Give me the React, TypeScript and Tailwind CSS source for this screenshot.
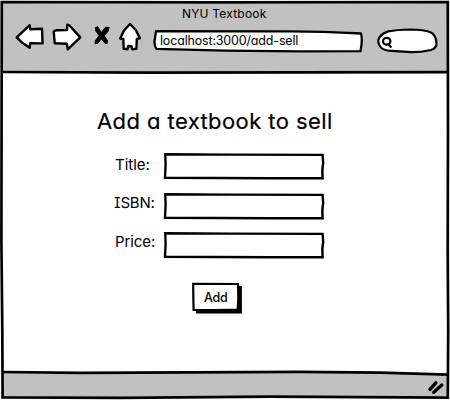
import type { ReactNode } from "react";

function Toolbar() {
  return (
    <div className="flex h-[51px] pl-[15px]">
      <svg width="135" height="51" viewBox="15 22 135 51" fill="white" stroke="black" strokeWidth="2.4" strokeLinejoin="round">
        <path d="M16.7 37.3 L29.7 25.2 L30.2 29.2 L42 28.8 L42.6 43.4 L30.2 43.2 L29.7 47.8 L22.3 42.8 Z" />
        <path d="M53.7 31.5 L56.5 30.2 L67 30 L67.3 24.7 L69.5 25.5 L80.3 37.4 L67.8 49.3 L66.8 43.8 L54.7 43.2 Z" />
        <path d="M95.3 27.6 L97.8 26.8 L101.3 32.5 L105.5 27.3 L109.2 27.3 L108.3 31 L104.2 35.7 L107.4 40.5 L107.2 43.5 L105 43.3 L101.3 38.8 L97.8 43.4 L95 43.7 L95.2 41 L99 35.5 L95.8 31 Z" fill="black" strokeWidth="1" />
        <path d="M130 24 L135.7 30 L140 38.2 L136.8 39 L136.4 48.8 L132.2 49.2 L131.5 46.2 L128.3 46 L127.5 49.2 L123.7 48.7 L123.3 39 L120.2 38.5 L124 30.5 Z" />
      </svg>
      <div className="relative mt-[8px] ml-[3px] h-[24px] w-[211px]">
        <svg className="absolute inset-0" width="211" height="24" viewBox="153 30 211 24" fill="white" stroke="black" strokeWidth="2.3" strokeLinejoin="round">
          <path d="M156 31.2 L285 31.4 Q318 31.2 361 33.5 Q362.8 40 360.5 51.2 L300 51.3 L225 50.7 L156.4 48.8 Q153.5 45 155 38 Z" />
        </svg>
        <span className="relative block pt-[2px] pl-[7px] text-[12.5px] leading-[18px] tracking-[-0.17px]">localhost:3000/add-sell</span>
      </div>
      <svg className="mt-[4px] ml-[12px]" width="64" height="28" viewBox="376 26 64 28" fill="white" stroke="black" strokeWidth="2.2" strokeLinejoin="round">
        <path d="M378.4 40 Q380 34 388 31.4 Q397 29.8 410 29.5 Q424 29.8 430 32 Q436 34.5 436.5 43 Q436.8 48 431 50 Q420 52.3 411 52.2 L392 50.8 Q383 51 379.8 46 Q377.8 43 378.4 40 Z" />
        <ellipse cx="386.7" cy="41.2" rx="3.7" ry="3.4" />
        <path d="M388 44 L391.4 47.6" fill="none" />
      </svg>
    </div>
  );
}

function Field({ label, className, gap }: { label: string; className: string; gap: string }) {
  return (
    <div className={`flex h-[27px] ${gap}`}>
      <div className={`w-[163px] text-[15px] leading-[20px] whitespace-nowrap ${className}`}>{label}</div>
      <svg width="162" height="27" viewBox="163 153 162 27" fill="white" stroke="black">
        <path d="M165.3 154.2 L230 154.6 L322.6 154.9 L323.2 163 L322.3 170 L322.6 178.2 L270 178.2 L165 177.8 L165.6 165 Z" strokeWidth="2.4" />
        <path d="M165 154.5 L248 154.5 M210 178.5 L323 178.5 M322.8 155 L322.5 178" strokeWidth="1.2" fill="none" />
      </svg>
    </div>
  );
}

function AddButton({ children }: { children: ReactNode }) {
  return (
    <button type="button" className="relative mt-[23px] ml-[191px] block h-[32px] w-[52px] text-left">
      <svg className="absolute inset-0" width="52" height="32" viewBox="191 283 52 32">
        <path d="M196 287 H241.9 V314.4 H196 Z" />
        <path d="M193.2 284.9 L238 285 L238.3 299 L237.7 310.5 L216 311 L193.6 310.8 L193.3 297 Z" fill="white" stroke="black" strokeWidth="2.2" />
      </svg>
      <span className="relative block pl-[13px] text-[12.5px] leading-[16px] font-medium tracking-[-0.2px]">{children}</span>
    </button>
  );
}

export default function App() {
  return (
    <div className="relative flex h-[400px] w-[450px] flex-col overflow-hidden bg-white font-['Inter','Noto_Sans',sans-serif] text-black [font-feature-settings:'cv11','cv08']">
      <header className="mx-[2px] mt-[1px] h-[72px] bg-[#c1c1c1]">
        <div className="-ml-[2px]">
          <h1 className="h-[21px] pt-[3px] pl-[182px] text-[12px] leading-[20px] tracking-[0.2px]">NYU Textbook</h1>
          <Toolbar />
        </div>
      </header>
      <main className="h-[300px]">
        <h2 className="h-[80px] pt-[33px] pl-[97px] text-[22px] leading-[30px] tracking-[0.42px] whitespace-nowrap [-webkit-text-stroke:0.2px_black]">Add a textbook to sell</h2>
        <Field label="Title:" className="pt-[2px] pl-[115px]" gap="" />
        <Field label="ISBN:" className="pl-[114px] tracking-[-0.2px]" gap="mt-[13px]" />
        <Field label="Price:" className="pl-[115px] tracking-[-0.1px]" gap="mt-[12px]" />
        <AddButton>Add</AddButton>
      </main>
      <footer className="mx-[2px] flex h-[25px] justify-end bg-[#c1c1c1]">
        <svg className="mt-[6px] mr-[3px]" width="18" height="17" viewBox="427 379 18 17" stroke="black" strokeWidth="3.4" strokeLinecap="round">
          <path d="M430 389.4 L435.8 382.8 M433.8 392.3 L441.8 385" />
        </svg>
      </footer>
      <svg className="pointer-events-none absolute inset-0" width="450" height="400" viewBox="0 0 450 400" fill="none" stroke="black" strokeWidth="2.7">
        <path d="M1.8 2 L220 2.3 L447.8 2 L448 130 L447.7 250 L448.2 330 L447.8 397.6 L270 396.7 L120 397.8 L2.6 397.3 L2.3 330 L1.4 240 L1.6 110 Z" />
        <path d="M2 72 L150 72.7 L300 72.4 L448 72.2" />
        <path d="M2 372 L80 372.8 L300 371.8 L380 372.6 L448 374.6" />
      </svg>
    </div>
  );
}
